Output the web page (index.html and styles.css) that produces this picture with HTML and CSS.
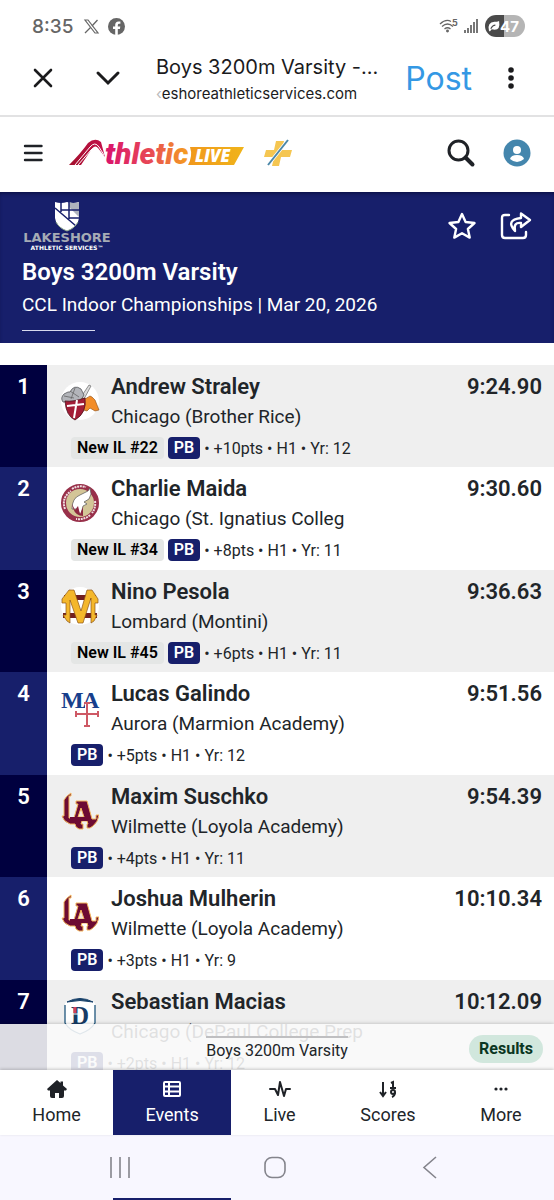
FILE: index.html
```
<!DOCTYPE html>
<html lang="en">
<head>
<meta charset="UTF-8">
<meta name="viewport" content="width=device-width, initial-scale=1">
<title>Boys 3200m Varsity</title>
<link rel="stylesheet" href="styles.css">
</head>
<body>
<svg class="sprite" aria-hidden="true">
  <symbol id="logo-loyola" viewBox="0 0 38 38">
    <path d="M10 1v3H8v22h5l4-14h-2V9h11l5 18h4v-4h3q-1 7-6 11l-3 2h-3v-4h1l-1-3h-5l-1 3h2v5h-4l-3-2-1-3H9q-7-3-8-8h2V8Q5 4 10 1Z" fill="#6d0b33" stroke="#f3b65c"/>
    <path d="m20 16-3 9h6Z" fill="#f4e6d8" stroke="#f3b65c"/>
    <path d="M9 27h20" stroke="#6d0b33" stroke-width="4"/>
  </symbol>
</svg>

<div class="status-bar">
  <div class="status-left">
    <span class="clock">8:35</span>
    <svg width="15" height="15" viewBox="0 0 15 15" fill="none" stroke="#666"><path d="M1 1h3l10 13h-3Z" stroke-width="1.2"/><path d="m13.500 1-5.500 6M6.500 8.500 1 14" stroke-width="1.300"/></svg>
    <svg width="17" height="17" viewBox="0 0 17 17"><circle cx="8.500" cy="8.500" r="8.500" fill="#666"/><path d="M7.200 17v-6H5V8.500h2.200V7q0-3.500 3.400-3.500h1.800v2.300h-1.200q-1.400 0-1.400 1.400v1.300h2.500l-.4 2.500H9.800v6Z" fill="#fff"/></svg>
  </div>
  <div class="status-right">
    <svg class="wifi" width="19" height="16" viewBox="0 0 19 16" fill="none" stroke="#666" stroke-width="1.300"><path d="M1 6q6-5.500 11-2.500M3 8.500q5.500-5 11 0M5.500 11q3-2.500 6 0"/><circle cx="8.500" cy="13" r=".8" fill="#666"/><text x="13" y="8" font-size="9" font-weight="700" fill="#666" stroke="none">5</text></svg>
    <svg class="signal" width="15" height="16" viewBox="0 0 15 16" fill="#777"><path d="M0 12h2v3H0zM3 10h2v5H3zM6 7h2v8H6zM9 4h2v11H9zM12 1h2v14h-2z"/></svg>
    <span class="battery"><svg width="12" height="12" viewBox="0 0 13 12"><path d="M1 11Q-1 2 7 1.500q3 0 5-1Q14 12 4 9.500L2 12Z" fill="#fff"/><path d="M3 9q2-4 5-4" fill="none" stroke="#4a4a4a" stroke-width="1.200"/></svg>47</span>
  </div>
</div>

<div class="browser-bar">
  <button class="icon-button" aria-label="Close"><svg width="20" height="20" viewBox="0 0 20 20" fill="none" stroke="#1b1b1d" stroke-width="2.600" stroke-linecap="round"><path d="m2 2 16 16M18 2 2 18"/></svg></button>
  <button class="icon-button collapse" aria-label="Minimize"><svg width="26" height="16" viewBox="0 0 26 16" fill="none" stroke="#1b1b1d" stroke-width="3" stroke-linecap="round"><path d="m3 3 10 10L23 3"/></svg></button>
  <div class="page-info">
    <div class="page-title">Boys 3200m Varsity -...</div>
    <div class="page-url"><span class="faded">‹</span>eshoreathleticservices.com</div>
  </div>
  <button class="post">Post</button>
  <button class="icon-button" aria-label="Menu"><svg width="6" height="24" viewBox="0 0 6 24" fill="#1b1b1d"><circle cx="3" cy="4" r="2.800"/><circle cx="3" cy="12" r="2.800"/><circle cx="3" cy="20" r="2.800"/></svg></button>
</div>

<header class="site-header">
  <button class="icon-button" aria-label="Open navigation"><svg width="20" height="18" viewBox="0 0 20 18" stroke="#1f2227" stroke-width="2.400" stroke-linecap="round"><path d="M2 2h16.500M2 9h16.500M2 16h16.500"/></svg></button>
  <a class="brand" href="#" aria-label="AthleticLIVE">
    <svg width="176" height="30" viewBox="0 0 176 30">
      <defs>
        <linearGradient id="brand-text" x1="0" x2="1"><stop stop-color="#d9126c"/><stop offset=".55" stop-color="#e84a55"/><stop offset="1" stop-color="#f5a01e"/></linearGradient>
        <linearGradient id="brand-tag" x1="0" x2="1"><stop stop-color="#f1981c"/><stop offset="1" stop-color="#f0b41a"/></linearGradient>
        <linearGradient id="brand-a" x1="0" x2="1"><stop stop-color="#a30f2c"/><stop offset="1" stop-color="#c5124c"/></linearGradient>
      </defs>
      <path d="M0 27Q12 15 19 5q7-6 13-1l4 15-7-9q-3-4-7 2L12 27Z" fill="url(#brand-a)"/>
      <path d="M6 27 21 9q5-6 9 0l5 8M9 27l13-15q3-4 7 0" fill="none" stroke="#fff"/>
      <path d="M121 9h54l-10 18h-46q5-9 2-18Z" fill="url(#brand-tag)"/>
      <text class="brand-name" x="36" y="26" fill="url(#brand-text)">thletic</text>
      <text class="brand-live" x="126" y="24" fill="#fff">LIVE</text>
    </svg>
  </a>
  <svg class="plus" width="28" height="28" viewBox="0 0 28 28"><path d="M12 2h8l-2 9h10l-2 7h-9l-2 9H8l2-9H0l2-7h8Z" fill="#f5c651"/><path d="M24 1 4 26" stroke="#fff" stroke-width="3.500"/><path d="M24 1 4 26" stroke="#4b87a8" stroke-width="2"/></svg>
  <div class="header-actions">
    <button class="icon-button" aria-label="Search"><svg width="28" height="28" viewBox="0 0 28 28" fill="none" stroke="#1f2227" stroke-linecap="round"><circle cx="11.500" cy="11.500" r="9.500" stroke-width="3"/><path d="m18.500 18.500 7 7" stroke-width="4"/></svg></button>
    <button class="icon-button" aria-label="Account"><svg width="28" height="28" viewBox="0 0 28 28"><circle cx="14" cy="14" r="13.500" fill="#4486ad"/><circle cx="14" cy="11" r="4" fill="#fff"/><path d="M7 20q1-4 7-4t7 4q-7 6-14 0Z" fill="#fff"/></svg></button>
  </div>
</header>

<section class="meet">
  <div class="meet-top">
    <svg class="host-logo" width="90" height="50" viewBox="0 0 90 50">
      <path d="M33 1q6 2 12 0 6 2 12 0v16q-1 9-12 13Q34 26 33 17Z" fill="#fff"/>
      <path d="M47 1q5 2 10 0v15L47 6Z" fill="#aeb3bd"/>
      <path d="m33 7 21 18M39 1v10M47 1v17M39 9h18M47 17h10" fill="none" stroke="#171f6b" stroke-width="1.500"/>
      <path d="M34 21q3 6 11 9 8-3 11-9" fill="none" stroke="#8ea88a"/>
      <text class="host-name" x="45" y="41">LAKESHORE</text>
      <text class="host-sub" x="45" y="49">ATHLETIC SERVICES™</text>
    </svg>
    <div class="meet-actions">
      <button class="icon-button" aria-label="Favorite"><svg width="28" height="28" viewBox="0 0 28 28" fill="none" stroke="#fff" stroke-width="2.400" stroke-linejoin="round"><path d="m14 2 3.600 8 8.900 1-6.600 6 1.800 8.600L14 21.300l-7.700 4.300L8.100 17l-6.600-6 8.900-1Z"/></svg></button>
      <button class="icon-button" aria-label="Share"><svg width="32" height="28" viewBox="0 0 32 28" fill="none" stroke="#fff" stroke-width="2.400" stroke-linejoin="round" stroke-linecap="round"><path d="M9 3H5Q2 3 2 6v17q0 3 3 3h18q3 0 3-3v-3"/><path d="M21 1.500 30 8l-9 7v-4q-8-1-6 8-10-11 6-13Z"/></svg></button>
    </div>
  </div>
  <h1>Boys 3200m Varsity</h1>
  <p>CCL Indoor Championships | Mar 20, 2026</p>
  <div class="divider"></div>
</section>

<main class="results">
  <table class="result-list">
    <tr>
      <th scope="row">1</th>
      <td class="athlete">
        <div class="person">
          <svg viewBox="0 0 38 38"><circle cx="19" cy="19" r="19" fill="#fff"/><path d="m20 15 8-12 2 1-7 13Z" fill="#ddd" stroke="#666" stroke-width=".7"/><path d="M9 10Q13 2 20 7l3 6-4 7H2q-3-4 1-8l4-2Z" fill="#b3b5ba" stroke="#55575b" stroke-width=".8"/><path d="m9 9 9 6M3 14l10 2M14 6l-4 11" stroke="#666" stroke-width=".8" fill="none"/><path d="M20 17q6 0 9-3l2 1 3 3 4 10-4 1-5-3-3 3-7-2Z" fill="#f28c28" stroke="#874914" stroke-width=".6"/><path d="M4 19q8 1 20-3 2 15-10 22Q5 34 4 19Z" fill="#a31c36" stroke="#4d1520" stroke-width=".8"/><path d="m16 18-3 18M6 24l17-2" stroke="#fff" stroke-width="2" fill="none"/></svg>
          <div><strong>Andrew Straley</strong><span class="school">Chicago (Brother Rice)</span></div>
        </div>
        <div class="meta"><span class="badge state">New IL #22</span><span class="badge pb">PB</span><span>• +10pts • H1 • Yr: 12</span></div>
      </td>
      <td class="time">9:24.90</td>
    </tr>
    <tr>
      <th scope="row">2</th>
      <td class="athlete">
        <div class="person">
          <svg viewBox="0 0 38 38"><circle cx="19" cy="19" r="16.500" fill="#d3c597" stroke="#98304a" stroke-width="5"/><path d="M4 25q-4-11 6-18M11 5q6-4 14-2M34 17q1 7-3 12M29 31q-5 5-14 4" fill="none" stroke="#f0dfe2" stroke-width="2" stroke-dasharray="2 .8"/><path d="M11 25q0-11 8-14l8-4 2-3 1 6-2 5-5 3 3 2-4 2-2 9-5-6Z" fill="#fff" stroke="#555" stroke-width=".7"/><path d="m11 20 3 6 3-4 2 8 3-7v9q-9 0-11-12Z" fill="#8d2740"/></svg>
          <div><strong>Charlie Maida</strong><span class="school">Chicago (St. Ignatius Colleg</span></div>
        </div>
        <div class="meta"><span class="badge state">New IL #34</span><span class="badge pb">PB</span><span>• +8pts • H1 • Yr: 11</span></div>
      </td>
      <td class="time">9:30.60</td>
    </tr>
    <tr>
      <th scope="row">3</th>
      <td class="athlete">
        <div class="person">
          <svg viewBox="0 0 38 38"><circle cx="19" cy="19" r="19" fill="#fff"/><path d="M3 8h32v5H3zM2 26h34v5H2z" fill="#711f20"/><path d="M1 12 8 3h5l7 21 6-21h5l6 9v4h-3v12h2l-3 6-3 2V11l-8 25h-5L9 13v23l-3-2-4-6h3V16H1Z" fill="#f4b72b" stroke="#8c5519" stroke-width=".7"/></svg>
          <div><strong>Nino Pesola</strong><span class="school">Lombard (Montini)</span></div>
        </div>
        <div class="meta"><span class="badge state">New IL #45</span><span class="badge pb">PB</span><span>• +6pts • H1 • Yr: 11</span></div>
      </td>
      <td class="time">9:36.63</td>
    </tr>
    <tr>
      <th scope="row">4</th>
      <td class="athlete">
        <div class="person">
          <svg viewBox="0 0 38 38"><text class="marmion" x="0" y="19">M</text><text class="marmion" x="21" y="19">A</text><path d="M26 14v22" stroke="#fff" stroke-width="4"/><g fill="none" stroke="#ce5965" stroke-width="2"><path d="M26 14v23M15 25h22M23 14h6M23 37h6M15 22v6M37 22v6"/></g></svg>
          <div><strong>Lucas Galindo</strong><span class="school">Aurora (Marmion Academy)</span></div>
        </div>
        <div class="meta"><span class="badge pb">PB</span><span>• +5pts • H1 • Yr: 12</span></div>
      </td>
      <td class="time">9:51.56</td>
    </tr>
    <tr>
      <th scope="row">5</th>
      <td class="athlete">
        <div class="person">
          <svg><use href="#logo-loyola"/></svg>
          <div><strong>Maxim Suschko</strong><span class="school">Wilmette (Loyola Academy)</span></div>
        </div>
        <div class="meta"><span class="badge pb">PB</span><span>• +4pts • H1 • Yr: 11</span></div>
      </td>
      <td class="time">9:54.39</td>
    </tr>
    <tr>
      <th scope="row">6</th>
      <td class="athlete">
        <div class="person">
          <svg><use href="#logo-loyola"/></svg>
          <div><strong>Joshua Mulherin</strong><span class="school">Wilmette (Loyola Academy)</span></div>
        </div>
        <div class="meta"><span class="badge pb">PB</span><span>• +3pts • H1 • Yr: 9</span></div>
      </td>
      <td class="time">10:10.34</td>
    </tr>
    <tr>
      <th scope="row">7</th>
      <td class="athlete">
        <div class="person">
          <svg viewBox="0 0 38 38"><path d="M4 6q15-8 30 0v20q-3 7-15 11Q7 33 4 26Z" fill="#fff"/><path d="M6 5q13-7 26 0-13-3-26 0Z" fill="#164069" stroke="#164069"/><path d="M4 8v18q4 7 15 11 11-4 15-11V8" fill="none" stroke="#21577d" stroke-width="1.300"/><text class="depaul" x="10" y="27">D</text><path d="M14 10v6" stroke="#d0405a" stroke-width="3"/><path d="M10 17h7" stroke="#fff"/></svg>
          <div><strong>Sebastian Macias</strong><span class="school">Chicago (DePaul College Prep</span></div>
        </div>
        <div class="meta"><span class="badge pb">PB</span><span>• +2pts • H1 • Yr: 12</span></div>
      </td>
      <td class="time">10:12.09</td>
    </tr>
  </table>
  <div class="event-drawer">
    <div class="drawer-title">Boys 3200m Varsity</div>
    <span class="drawer-status">Results</span>
  </div>
</main>

<nav class="tabs">
  <a href="#"><svg viewBox="0 0 20 18" fill="#1f2227"><path d="M10 0 13.500 3V1.500H16V5.500L20 9l-1 1.500h-2V16q0 2-2 2h-3v-5H8v5H5q-2 0-2-2v-5.500H1L0 9Z"/></svg>Home</a>
  <a class="active" href="#"><svg viewBox="0 0 20 18" fill="none" stroke="#fff" stroke-width="2"><rect x="2" y="2" width="16" height="14" rx="1"/><path d="M2 6.500h16M2 11.500h16M7 2v14"/></svg>Events</a>
  <a href="#"><svg viewBox="0 0 22 18" fill="none" stroke="#1f2227" stroke-width="2" stroke-linejoin="round" stroke-linecap="round"><path d="M1 9h5l3 6 2-13 4 14 2-7h4"/></svg>Live</a>
  <a href="#"><svg viewBox="0 0 18 18" fill="none" stroke="#1f2227" stroke-width="2"><path d="M4 2v14M1 12l3 4 3-4M12 3l2-1v6M11 8h6"/><circle cx="14" cy="12" r="2"/><path d="M16 12q0 4-3 5"/></svg>Scores</a>
  <a href="#"><svg viewBox="0 0 18 18" fill="#1f2227"><circle cx="4" cy="9" r="1.600"/><circle cx="9" cy="9" r="1.600"/><circle cx="14" cy="9" r="1.600"/></svg>More</a>
</nav>

<div class="system-nav">
  <button class="icon-button" aria-label="Recent apps"><svg width="24" height="24" viewBox="0 0 24 24" stroke="#84848c" stroke-width="1.600"><path d="M3 1v21M12 1v21M21 1v21"/></svg></button>
  <button class="icon-button" aria-label="Home screen"><svg width="24" height="24" viewBox="0 0 24 24" fill="none" stroke="#84848c" stroke-width="1.600"><rect x="2" y="1.500" width="20" height="20" rx="7"/></svg></button>
  <button class="icon-button" aria-label="Back"><svg width="24" height="24" viewBox="0 0 24 24" fill="none" stroke="#84848c" stroke-width="1.600"><path d="M18 1 6 11.500 18 22"/></svg></button>
</div>
</body>
</html>
```
FILE: styles.css
```
* {
  box-sizing: border-box;
}
body {
  margin: 0;
  height: 100vh;
  display: flex;
  flex-direction: column;
  overflow: hidden;
  background: #fff;
  color: #212529;
  font-family: Roboto, sans-serif;
}
svg {
  display: block;
  flex: none;
  overflow: visible;
}
.sprite {
  position: absolute;
  width: 0;
  height: 0;
}
button {
  border: 0;
  padding: 0;
  background: none;
  font: inherit;
  cursor: pointer;
}
.icon-button {
  display: flex;
  align-items: center;
  justify-content: center;
}

/* phone status bar */
.status-bar {
  display: flex;
  justify-content: space-between;
  align-items: center;
  padding: 14px 29px 0 32px;
  height: 38px;
  flex: none;
  color: #666;
  font-family: Inter, sans-serif;
}
.status-left, .status-right {
  display: flex;
  align-items: center;
  gap: 9px;
}
.clock {
  font-size: 19px;
  font-weight: 500;
  margin-right: 2px;
}
.status-right {
  gap: 6px;
}
.battery {
  display: flex;
  align-items: center;
  width: 40px;
  height: 22px;
  padding-left: 3px;
  border-radius: 11px;
  background: linear-gradient(to right, #4a4a4a 47%, #b5b5b5 47%);
  color: #fff;
  font-size: 15px;
  font-weight: 700;
}

/* in-app browser */
.browser-bar {
  display: flex;
  align-items: center;
  flex: none;
  height: 79px;
  padding: 3px 40px 0 33px;
  border-bottom: 2px solid #e2e2e3;
  color: #1b1b1d;
  font-family: Inter, sans-serif;
}
.collapse {
  margin-left: 42px;
}
.page-info {
  flex: 1;
  min-width: 0;
  padding: 3px 0 0 35px;
  white-space: nowrap;
}
.page-title {
  font-size: 20px;
  line-height: 28px;
}
.page-url {
  font-size: 15px;
  line-height: 26px;
}
.faded {
  color: #bbb;
}
.post {
  margin-right: 36px;
  color: #3498e4;
  font-size: 32px;
}

/* site header */
.site-header {
  display: flex;
  align-items: center;
  flex: none;
  height: 75px;
  padding: 0 23px 3px;
}
.brand {
  margin-left: 26px;
}
.brand-name {
  font-size: 30px;
  font-style: italic;
  font-weight: 900;
}
.brand-live {
  font-family: "Open Sans", sans-serif;
  font-size: 17px;
  font-style: italic;
  font-weight: 800;
}
.plus {
  margin-left: 19px;
}
.header-actions {
  display: flex;
  gap: 28px;
  margin-left: auto;
}

/* meet banner */
.meet {
  flex: none;
  height: 151px;
  padding: 9px 22px 0;
  background: #171f6b;
  box-shadow: inset 0 3px 4px -2px #080d3c;
  color: #fff;
}
.meet-top {
  display: flex;
  justify-content: space-between;
}
.host-name {
  fill: #a5abb5;
  font-family: "DejaVu Sans", sans-serif;
  font-size: 13px;
  font-weight: 700;
  text-anchor: middle;
}
.host-sub {
  fill: #fff;
  font-family: "DejaVu Sans", sans-serif;
  font-size: 6px;
  font-weight: 700;
  text-anchor: middle;
}
.meet-actions {
  display: flex;
  gap: 24px;
}
.meet h1 {
  margin: 4px 0 0;
  font-size: 24px;
  font-weight: 600;
  line-height: 34px;
}
.meet p {
  margin: 0;
  font-size: 19px;
  line-height: 32px;
}
.divider {
  width: 73px;
  height: 1px;
  margin-top: 9px;
  background: #d8daed;
}

/* results */
.results {
  position: relative;
  flex: 1;
  min-height: 0;
  padding-top: 22px;
  overflow: hidden;
}
.result-list {
  width: 100%;
  border-collapse: collapse;
}
.result-list tr {
  height: 102px;
  background: #fff;
}
.result-list tr:nth-child(odd) {
  background: #efefef;
}
.result-list tr:nth-child(even) {
  height: 103px;
}
.result-list th, .result-list td {
  padding: 7px 0 0;
  vertical-align: top;
}
.result-list th {
  width: 47px;
  background: #171f6b;
  color: #fff;
  font-size: 22px;
  font-weight: 600;
  line-height: 30px;
}
.result-list tr:nth-child(odd) th {
  background: #00003f;
}
.person {
  display: flex;
  gap: 12px;
  padding-left: 14px;
}
.person svg {
  width: 38px;
  height: 38px;
  margin-top: 10px;
}
.person strong, .school {
  display: block;
  line-height: 30px;
  white-space: nowrap;
}
.person strong {
  font-size: 22px;
  font-weight: 600;
}
.school {
  font-size: 19px;
}
.marmion {
  fill: #173f8c;
  font-family: "Liberation Serif", serif;
  font-size: 24px;
  font-weight: 700;
}
.depaul {
  fill: #173c66;
  font-family: "Liberation Serif", serif;
  font-size: 25px;
  font-weight: 700;
}
.meta {
  display: flex;
  align-items: center;
  gap: 4px;
  height: 32px;
  padding-left: 24px;
  font-size: 16px;
  white-space: nowrap;
}
.badge {
  padding: 0 6px;
  border-radius: 4px;
  font-weight: 600;
  line-height: 22px;
}
.state {
  background: #e4e6e5;
  color: #000;
}
.pb {
  background: #171f6b;
  color: #fff;
}
.result-list .time {
  padding-right: 12px;
  font-size: 22px;
  font-weight: 600;
  line-height: 30px;
  text-align: right;
}
.event-drawer {
  position: absolute;
  right: 0;
  bottom: 0;
  left: 0;
  display: flex;
  align-items: center;
  justify-content: center;
  height: 46px;
  padding-top: 4px;
  background: rgba(250, 250, 250, 0.88);
  box-shadow: 0 0 4px rgba(0, 0, 0, 0.25);
}
.drawer-title {
  padding-top: 2px;
  border-top: 2px solid #bfbfc1;
  font-size: 16px;
  line-height: 22px;
}
.drawer-status {
  position: absolute;
  right: 11px;
  padding: 0 10px;
  border-radius: 14px;
  background: #d1e7dd;
  color: #0a3622;
  font-size: 16px;
  font-weight: 700;
  line-height: 28px;
}

/* bottom tabs */
.tabs {
  position: relative;
  display: flex;
  flex: none;
  height: 65px;
  background: #fff;
  box-shadow: 0 -1px 3px rgba(0, 0, 0, 0.2);
}
.tabs a {
  position: relative;
  display: flex;
  flex: 1 1 auto;
  flex-direction: column;
  align-items: center;
  gap: 3px;
  padding-top: 10px;
  color: #212529;
  font-size: 18px;
  line-height: 28px;
  text-decoration: none;
}
.tabs svg {
  width: 22px;
  height: 18px;
}
.tabs .active {
  background: #171f6b;
  color: #fff;
}
/* the active tab shows again below the system buttons */
.tabs .active::after {
  content: "";
  position: absolute;
  top: 128px;
  right: 0;
  left: 0;
  height: 2px;
  background: #171f6b;
}
.system-nav {
  display: flex;
  justify-content: space-between;
  align-items: center;
  flex: none;
  height: 65px;
  padding: 0 112px 0 108px;
  background: #f8f7ff;
}
```
